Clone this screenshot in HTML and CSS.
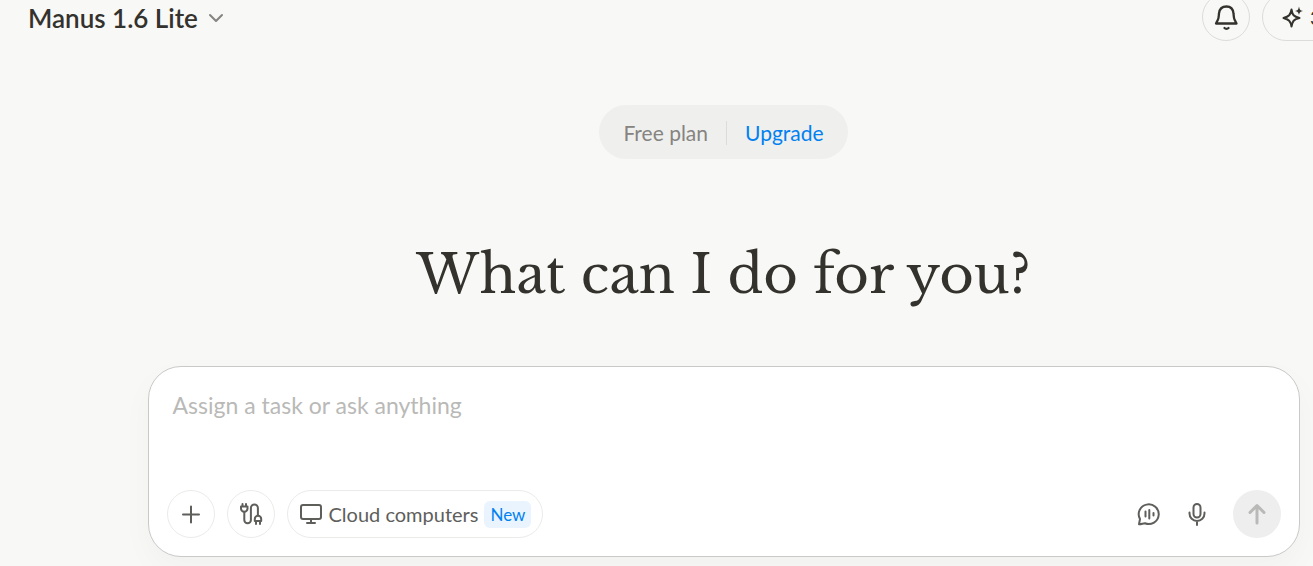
FILE: index.html
```
<!DOCTYPE html>
<html lang="en">
<head>
  <meta charset="UTF-8" />
  <meta name="viewport" content="width=device-width, initial-scale=1" />
  <title>Manus</title>
  <link rel="stylesheet" href="styles.css">
</head>
<body>
  <div class="app">
    <header class="topbar">
      <button class="model" type="button">
        Manus 1.6 Lite
        <svg width="18" height="18" viewBox="0 0 18 18" aria-hidden="true"><path d="M3 6l6 6 6-6" /></svg>
      </button>

      <div class="topbar-actions">
        <button class="round" type="button" aria-label="Notifications">
          <svg width="28" height="28" viewBox="0 0 28 28" aria-hidden="true">
            <path d="M4 20.5L6 16.5C6.8 15 6.7 13 7 10.5C7.4 6.3 10 3.5 14.5 3.5C19 3.5 21.1 6.3 21.5 10.5C21.8 13 21.7 15 22.5 16.5L24.5 20.5Z" />
            <path d="M12.500 25C13.5 26 15.5 26 16.5 25" />
          </svg>
        </button>
        <button class="credits" type="button">
          <svg width="24" height="24" viewBox="0 0 24 24" aria-hidden="true">
            <path d="M10.5 4.5C11.5 10 12.5 11.5 18.5 13C12.5 14.5 11.5 16 10.5 21.500C9.5 16 8 14.5 2.5 13C8 11.5 9.5 10 10.5 4.5Z" />
            <path class="solid" d="M18 1.500C18.7 4.800 19.200 5.300 22 6C19.200 6.700 18.700 7.200 18 10C17.300 7.200 16.800 6.700 14 6C16.800 5.300 17.300 4.800 18 1.500Z" />
          </svg>
          <span>300</span>
        </button>
      </div>
    </header>

    <main>
      <div class="plan">
        <span>Free plan</span>
        <a href="#upgrade">Upgrade</a>
      </div>

      <h1>What can I do for you?</h1>

      <form class="composer">
        <textarea rows="1" placeholder="Assign a task or ask anything" aria-label="Task"></textarea>

        <div class="toolbar">
          <button class="round" type="button" aria-label="Add">
            <svg width="24" height="24" viewBox="0 0 24 24" aria-hidden="true"><path d="M12 4.5v16M4 12.5h16" /></svg>
          </button>
          <button class="round" type="button" aria-label="Connectors">
            <svg width="24" height="24" viewBox="0 0 24 24" aria-hidden="true">
              <path d="M3.5 2v2.500M7 2v2.500M2 4.500h6.500v2a3.200 3.200 0 0 1-6.500 0z" />
              <path d="M5.300 10v8a3.300 3.300 0 0 0 6.600 0V6a3.500 3.500 0 0 1 7 0v7" />
              <path d="M15.800 19v-2a3.200 3.200 0 0 1 6.400 0v2zM17 19.500v2.500M21 19.500v2.500" />
            </svg>
          </button>
          <button class="cloud" type="button">
            <svg width="24" height="24" viewBox="0 0 24 24" aria-hidden="true">
              <rect x="2" y="3" width="20" height="14" rx="2" />
              <path d="M12 17v4M8 21h8" />
            </svg>
            <span>Cloud computers</span>
            <span class="badge">New</span>
          </button>

          <div class="toolbar-end">
            <button class="icon" type="button" aria-label="Voice chat">
              <svg width="24" height="24" viewBox="0 0 24 24" aria-hidden="true">
                <path d="M2 22.200L3 17A10 9.800 0 1 1 8 21.300C6 21.300 4.500 22.300 2 22.200Z" />
                <path d="M8.500 9.500v5M12.300 8v8.500M16.500 11v2.500" />
              </svg>
            </button>
            <button class="icon" type="button" aria-label="Dictate">
              <svg width="24" height="24" viewBox="0 0 24 24" aria-hidden="true">
                <rect x="8.500" y="2" width="7" height="13.500" rx="3.500" />
                <path d="M4.500 10.500v1a7.500 7.500 0 0 0 15 0v-1M12 19v4" />
              </svg>
            </button>
            <button class="send" type="submit" aria-label="Send" disabled>
              <svg width="24" height="24" viewBox="0 0 24 24" aria-hidden="true"><path d="M12 21V4M5 10.500l7-7 7 7" /></svg>
            </button>
          </div>
        </div>
      </form>
    </main>
  </div>
</body>
</html>
```

FILE: styles.css
```
* {
  box-sizing: border-box;
}

body {
  margin: 0;
  min-height: 100vh;
  overflow: hidden;
  background: #f8f8f7;
  color: #34322d;
  font-family: Lato, "Open Sans", sans-serif;
}

button {
  padding: 0;
  border: 0;
  background: none;
  color: inherit;
  font: inherit;
  cursor: pointer;
}

svg {
  flex: none;
  fill: none;
  stroke: currentColor;
  stroke-width: 2;
  stroke-linecap: round;
  stroke-linejoin: round;
}

.solid {
  fill: currentColor;
  stroke: none;
}

/* the app is wider than the window, so the right end runs off screen */
.app {
  width: calc(100% + 134px);
}

.topbar {
  display: flex;
  align-items: center;
  justify-content: space-between;
  height: 34px;
  padding: 0 28px;
}

.model {
  display: flex;
  align-items: center;
  gap: 9px;
  padding-top: 2px;
  font-size: 26px;
  font-weight: 600;
  line-height: 36px;
}

.model svg {
  color: #858481;
}

.topbar-actions {
  display: flex;
  gap: 12px;
}

.round {
  display: flex;
  align-items: center;
  justify-content: center;
  width: 48px;
  height: 48px;
  border: 1px solid #ebebea;
  border-radius: 50%;
}

.topbar .round,
.credits {
  border: 1px solid #dcdcdb;
}

.topbar .round svg {
  stroke-width: 2.3;
}

.credits {
  display: flex;
  align-items: center;
  gap: 5px;
  width: 157px;
  height: 48px;
  padding: 0 18px;
  border-radius: 24px;
  font-size: 20px;
}

main {
  display: flex;
  flex-direction: column;
  align-items: center;
  padding: 71px 24px 9px;
}

.plan {
  display: flex;
  align-items: center;
  height: 54px;
  padding: 2px 24px 0;
  border-radius: 27px;
  background: #efefed;
  color: #858481;
  font-size: 21px;
  line-height: 24px;
}

.plan a {
  margin-left: 18px;
  padding-left: 18px;
  border-left: 1px solid #dcdcda;
  color: #0081f2;
  text-decoration: none;
}

h1 {
  margin: 79px 0 55px;
  font-family: "Libre Baskerville", "Liberation Serif", serif;
  font-size: 53px;
  font-weight: 400;
  line-height: 73px;
}

.composer {
  display: flex;
  flex-direction: column;
  width: 100%;
  max-width: 1152px;
  padding: 18px;
  border: 1px solid #c9c9c8;
  border-radius: 33px;
  background: #fff;
  box-shadow: 0 12px 32px rgba(0, 0, 0, 0.03);
}

.composer textarea {
  height: 72px;
  margin-bottom: 33px;
  padding: 2px 6px;
  border: 0;
  outline: 0;
  resize: none;
  background: none;
  color: inherit;
  font-family: inherit;
  font-size: 23px;
  line-height: 36px;
}

.composer textarea::placeholder {
  color: #b9b9b7;
}

.toolbar,
.toolbar-end {
  display: flex;
  align-items: center;
  gap: 12px;
  color: #5e5e5b;
}

.toolbar-end {
  gap: 24px;
  margin-left: auto;
}

.cloud {
  display: flex;
  align-items: center;
  gap: 6px;
  height: 48px;
  padding: 0 11px;
  border: 1px solid #ebebea;
  border-radius: 24px;
  font-size: 20px;
}

.badge {
  padding: 0 6px;
  border-radius: 6px;
  background: #eaf4fe;
  color: #0081f2;
  font-size: 17px;
  line-height: 27px;
}

.icon {
  display: flex;
}

.send {
  display: flex;
  align-items: center;
  justify-content: center;
  width: 48px;
  height: 48px;
  border-radius: 50%;
  background: #eeeeee;
  color: #b9b9b7;
}

.send svg {
  stroke-width: 3;
}
```
